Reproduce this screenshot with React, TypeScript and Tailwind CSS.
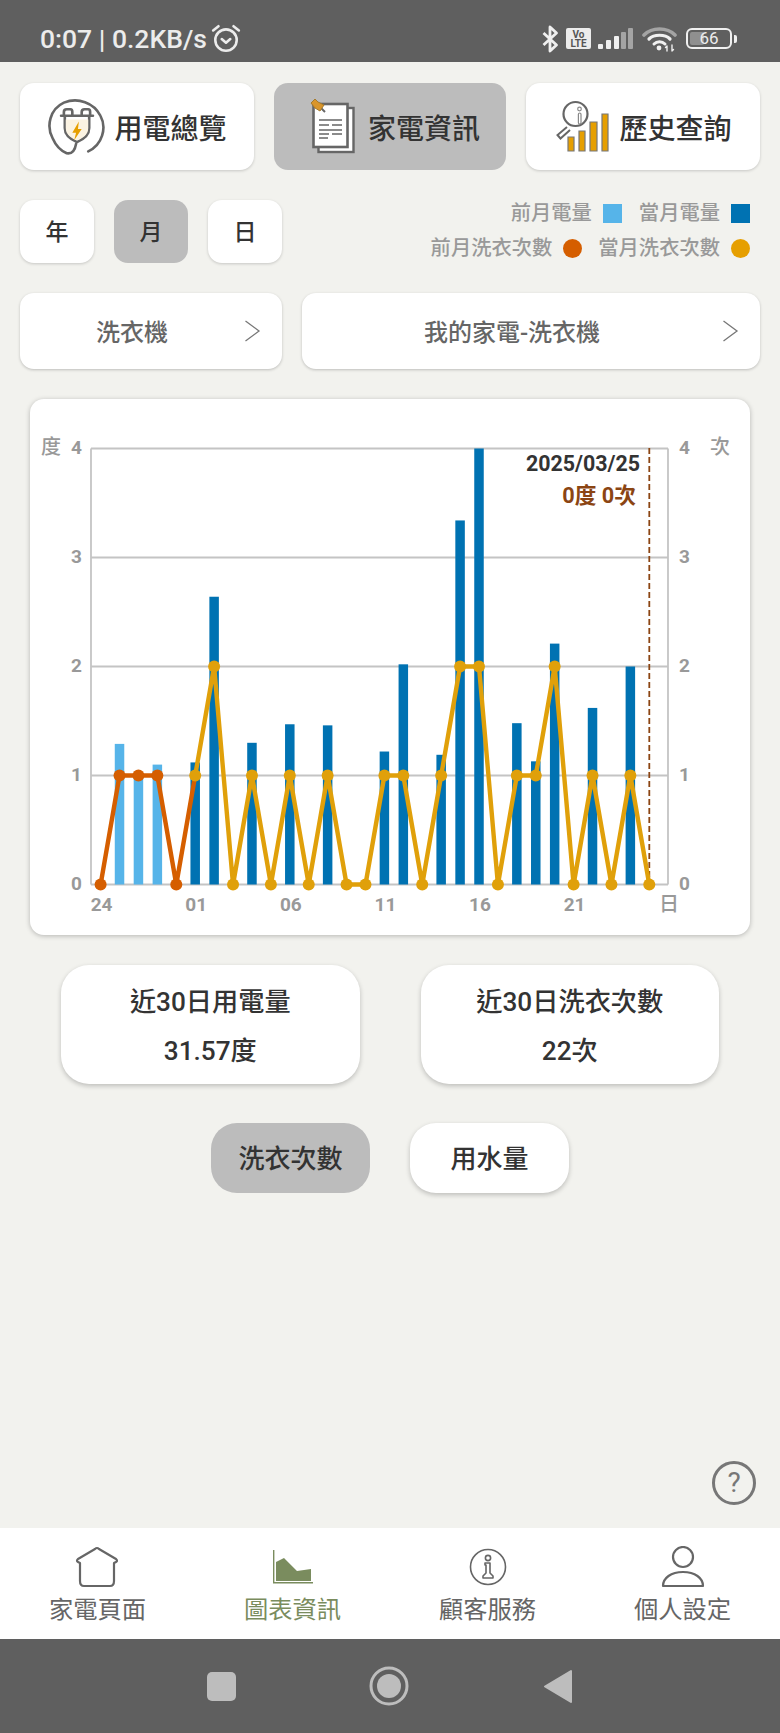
import type { ReactNode } from "react";

// kWh per day, slots 0-4 belong to the previous month
const BARS = [0, 1.29, 1, 1.1, 0, 1.12, 2.64, 0, 1.3, 0, 1.47, 0, 1.46, 0, 0, 1.22, 2.02, 0, 1.19, 3.34, 4, 0, 1.48, 1.13, 2.21, 0, 1.62, 0, 2, 0];
const WASHES = [0, 1, 1, 1, 0, 1, 2, 0, 1, 0, 1, 0, 1, 0, 0, 1, 1, 0, 1, 2, 2, 0, 1, 1, 2, 0, 1, 0, 1, 0];
const X_LABELS: [number, string][] = [[0, "24"], [5, "01"], [10, "06"], [15, "11"], [20, "16"], [25, "21"]];

const UNIT_H = 109;
const slotX = (i: number) => 100.6 + i * 18.92;
const valY = (v: number) => 884.5 - v * UNIT_H;

function PlugIcon() {
  return (
    <svg width="60" height="60" viewBox="0 0 64 64" fill="none" stroke="#666" strokeWidth="2.8">
      <path d="M44 58 C59 51 64 33 57 20 C50 6 33 0 18 6 C3 13 -1 31 6 44 C9 51 14 57 21 60 C27 61 30 56 31 50" strokeLinecap="round" />
      <path d="M15 20 H49 M19 20 V33 C19 41 25 45 32 48 C39 45 45 41 45 33 V20" strokeLinecap="round" />
      <path d="M18 20 V16 Q18 13 21 13 H25 Q27 13 27 16 V20 M37 20 V16 Q37 13 40 13 H44 Q46 13 46 16 V20" />
      <path d="M20 24 H44 V33 C44 40 38 44 32 46.5 C26 44 20 40 20 33 Z" fill="#fbf3e2" stroke="none" />
      <path d="M34 26 L27 38 H31 L29 46 L37 34 H33 Z" fill="#e69f00" stroke="none" />
    </svg>
  );
}

function DocIcon() {
  return (
    <svg width="48" height="58" viewBox="0 0 48 58" fill="none">
      <rect x="8.5" y="10" width="35" height="44" fill="#fff" stroke="#666" strokeWidth="2.4" />
      <rect x="3.5" y="6" width="34" height="43" fill="#fff" stroke="#666" strokeWidth="2.6" />
      <path d="M9 22 H32 M9 27 H19 M22 27 H32 M9 32 H32 M9 36 H19 M22 36 H32 M9 40 H18" stroke="#666" strokeWidth="1.6" />
      <path d="M10 9 L15 14" stroke="#666" strokeWidth="2" />
      <path d="M1 5 L5 1 L8 4 L14 7 L10 13 L5 10 Z" fill="#d9952a" stroke="#a57a2c" strokeWidth="1" />
    </svg>
  );
}

function SearchBarsIcon() {
  return (
    <svg width="56" height="54" viewBox="0 0 56 54" fill="none">
      <path d="M14 37 H20 V51 H14 Z M25 31 H31 V51 H25 Z M36 22 H43 V51 H36 Z M48 14 H54 V51 H48 Z" fill="#e69f00" stroke="#777" strokeWidth="1.2" />
      <path d="M13 27 L3.5 35 L6.5 38.5 L16 30" fill="#fff" stroke="#666" strokeWidth="2" />
      <circle cx="21.5" cy="14" r="12" fill="#fff" stroke="#666" strokeWidth="2.2" />
      <circle cx="25.5" cy="9" r="1.8" stroke="#888" strokeWidth="1.2" />
      <rect x="24.4" y="13" width="2.6" height="11" rx="1.3" stroke="#888" strokeWidth="1.2" />
    </svg>
  );
}

function AlarmIcon() {
  return (
    <svg width="30" height="29" viewBox="0 0 28 27" fill="none" stroke="#ececec" strokeWidth="2.4" strokeLinecap="round" strokeLinejoin="round">
      <circle cx="14" cy="15" r="10" />
      <path d="M2 6 L7 2 M26 6 L21 2" />
      <path d="M10 14 L14 17.5 L18 14" />
    </svg>
  );
}

function StatusIcons() {
  return (
    <div className="flex items-center">
      <svg width="17" height="28" viewBox="0 0 17 28" fill="none" stroke="#f0f0f0" strokeWidth="2.8" strokeLinejoin="round">
        <path d="M1.5 8 L14.5 20 L8 26 V2 L14.5 8 L1.5 20" />
      </svg>
      <div className="ml-[7px] flex h-[21px] w-[25px] flex-col items-center justify-center rounded-[2px] bg-[#ececec] text-[10px] leading-[9px] font-bold text-[#555]">
        <span>Vo</span>
        <span>LTE</span>
      </div>
      <svg className="ml-[7px]" width="35" height="22" viewBox="0 0 35 22">
        <rect x="0" y="16" width="5" height="5" rx="1" fill="#f0f0f0" />
        <rect x="8" y="12" width="5" height="9" rx="1" fill="#f0f0f0" />
        <rect x="16" y="8" width="5" height="13" rx="1" fill="#f0f0f0" />
        <rect x="23" y="4" width="5" height="17" rx="1" fill="#a4a4a4" />
        <rect x="30" y="0" width="5" height="21" rx="1" fill="#a4a4a4" />
      </svg>
      <svg className="ml-[9px]" width="35" height="26" viewBox="0 0 35 26" fill="none" strokeLinecap="round">
        <path d="M2 9 C10 1 25 1 33 9" stroke="#a4a4a4" strokeWidth="3.6" />
        <path d="M7 13 C12 8 23 8 28 13" stroke="#f0f0f0" strokeWidth="3.2" />
        <path d="M12 18 C15 15 20 15 23 18" stroke="#f0f0f0" strokeWidth="3" />
        <circle cx="17" cy="22" r="2.4" fill="#f0f0f0" />
        <path d="M25 20 V25 M23.5 21.5 L25 20 M30 19 V25 M31.5 23.5 L30 25" stroke="#f0f0f0" strokeWidth="1.4" />
      </svg>
      <div className="ml-[9px] flex items-center">
        <div className="relative flex h-[21px] w-[46px] items-center justify-center rounded-[6px] border-2 border-[#f0f0f0] text-[17px] leading-none text-[#ececec]">
          <div className="absolute top-[2px] bottom-[2px] left-[2px] w-[14px] rounded-[2px] bg-[#8f8f8f]" />
          <span className="relative">66</span>
        </div>
        <div className="ml-[2px] h-[8px] w-[3px] rounded-r-[2px] bg-[#f0f0f0]" />
      </div>
    </div>
  );
}

function TopTab({ icon, label, active, layout }: { icon: ReactNode; label: string; active?: boolean; layout: string }) {
  return (
    <div className={`flex h-[87px] items-center justify-center rounded-[14px] text-[28px] font-medium text-[#333] ${layout} ${active ? "bg-[#bcbcbc]" : "bg-white shadow-[0_1px_3px_rgba(0,0,0,0.18)]"}`}>
      {icon}
      <span className="pt-[6px]">{label}</span>
    </div>
  );
}

function PeriodBtn({ label, active }: { label: string; active?: boolean }) {
  return (
    <div className={`flex h-[63px] w-[74px] items-center justify-center rounded-[14px] pt-[4px] text-[23px] font-medium text-[#333] ${active ? "bg-[#bcbcbc]" : "bg-white shadow-[0_1px_3px_rgba(0,0,0,0.18)]"}`}>
      {label}
    </div>
  );
}

function SelectBox({ label }: { label: string }) {
  return (
    <div className="flex h-[76px] items-center rounded-[14px] bg-white pr-[21px] shadow-[0_1px_3px_rgba(0,0,0,0.22)]">
      <span className="flex-1 pt-[3px] text-center text-[24px] font-medium text-[#666]">{label}</span>
      <svg width="17" height="24" viewBox="0 0 17 24" fill="none" stroke="#777" strokeWidth="1.3">
        <path d="M1.5 2 L15 12 L1.5 22" />
      </svg>
    </div>
  );
}

function Legend({ label, swatch }: { label: string; swatch: string }) {
  return (
    <div className="flex items-center gap-[11px] text-[20.3px] leading-none text-[#999]">
      <span className="font-medium">{label}</span>
      <div className={swatch} />
    </div>
  );
}

function Chart() {
  const labelCls = "fill-[#999] text-[19px] font-bold";
  const line = (from: number, to: number) =>
    WASHES.slice(from, to + 1)
      .map((v, i) => `${slotX(from + i)},${valY(v)}`)
      .join(" ");
  return (
    <svg className="block" width="720" height="536" viewBox="30 399 720 536">
      {[0, 1, 2, 3, 4].map((v) => (
        <g key={v}>
          <line x1="91" x2="668" y1={valY(v)} y2={valY(v)} stroke="#c4c4c4" strokeWidth="1.8" />
          <text x="82" y={valY(v) + 5} textAnchor="end" className={labelCls}>{v}</text>
          <text x="679" y={valY(v) + 5} className={labelCls}>{v}</text>
        </g>
      ))}
      <line x1="91" x2="91" y1={valY(4)} y2={valY(0)} stroke="#c4c4c4" strokeWidth="1.8" />
      <line x1="668" x2="668" y1={valY(4)} y2={valY(0)} stroke="#c4c4c4" strokeWidth="1.8" />
      <text x="41" y="454" className="fill-[#999] text-[20px] font-medium">度</text>
      <text x="710" y="454" className="fill-[#999] text-[20px] font-medium">次</text>
      {BARS.map((v, i) =>
        v > 0 ? (
          <rect key={i} x={slotX(i) - 4.75} y={valY(v)} width="9.5" height={v * UNIT_H} fill={i < 5 ? "#56b4e9" : "#0072b2"} />
        ) : null,
      )}
      <line x1="649.3" x2="649.3" y1="448" y2="884" stroke="#8b4513" strokeWidth="1.8" strokeDasharray="6 3" />
      <polyline points={line(0, 5)} fill="none" stroke="#d55e00" strokeWidth="4.4" strokeLinejoin="round" />
      <polyline points={line(5, 29)} fill="none" stroke="#e0a00a" strokeWidth="4.4" strokeLinejoin="round" />
      {WASHES.map((v, i) => (
        <circle key={i} cx={slotX(i)} cy={valY(v)} r="6" fill={i < 5 ? "#d55e00" : "#e0a00a"} />
      ))}
      {X_LABELS.map(([i, t]) => (
        <text key={t} x={slotX(i) + 1} y="911" textAnchor="middle" className={labelCls}>{t}</text>
      ))}
      <text x="659" y="911" className="fill-[#999] text-[20px] font-medium">日</text>
      <text x="640" y="471" textAnchor="end" className="fill-[#333] text-[21.4px] font-bold">2025/03/25</text>
      <text x="636" y="503" textAnchor="end" className="fill-[#8b4513] text-[21.7px] font-bold">0度 0次</text>
    </svg>
  );
}

function StatCard({ title, value }: { title: string; value: string }) {
  return (
    <div className="flex h-[119px] flex-col items-center rounded-[28px] bg-white pt-[18px] text-[26.2px] leading-[38px] font-medium text-[#333] shadow-[0_2px_5px_rgba(0,0,0,0.22)]">
      <div>{title}</div>
      <div className="mt-[11px]">{value}</div>
    </div>
  );
}

function NavItem({ icon, label, active }: { icon: ReactNode; label: string; active?: boolean }) {
  return (
    <div className={`flex flex-col items-center text-[24.3px] leading-[34px] ${active ? "text-[#7a8c5e]" : "text-[#666]"}`}>
      <div className="flex h-[45px] items-center">{icon}</div>
      <div className="mt-[4px]">{label}</div>
    </div>
  );
}

export default function App() {
  return (
    <div className="flex h-[1733px] w-[780px] flex-col overflow-hidden bg-[#f2f2ee] [font-family:Roboto,'Noto_Sans_CJK_TC',sans-serif]">
      {/* Android status bar */}
      <div className="flex h-[62px] shrink-0 items-center justify-between bg-[#5f5f5f] pt-[15px] pr-[43px] pl-[40px]">
        <div className="flex items-center gap-[4px] text-[26.5px] leading-none font-medium text-[#ececec]">
          <span className="pt-[2px]">0:07 | 0.2KB/s</span>
          <AlarmIcon />
        </div>
        <StatusIcons />
      </div>

      <div className="flex flex-1 flex-col px-5">
        <div className="mt-[21px] grid grid-cols-[234px_232px_234px] gap-5">
          <TopTab icon={<PlugIcon />} label="用電總覽" layout="gap-[7px]" />
          <TopTab icon={<DocIcon />} label="家電資訊" active layout="gap-[10px] pl-[10px]" />
          <TopTab icon={<SearchBarsIcon />} label="歷史查詢" layout="gap-[9px]" />
        </div>

        <div className="mt-[30px] flex items-start justify-between pr-[10px]">
          <div className="flex gap-5">
            <PeriodBtn label="年" />
            <PeriodBtn label="月" active />
            <PeriodBtn label="日" />
          </div>
          <div className="flex flex-col items-end gap-[15px] pt-[3px]">
            <div className="flex gap-[17px]">
              <Legend label="前月電量" swatch="h-[19px] w-[19px] bg-[#56b4e9]" />
              <Legend label="當月電量" swatch="h-[19px] w-[19px] bg-[#0072b2]" />
            </div>
            <div className="flex gap-[16px]">
              <Legend label="前月洗衣次數" swatch="h-[19px] w-[19px] rounded-full bg-[#d55e00]" />
              <Legend label="當月洗衣次數" swatch="h-[19px] w-[19px] rounded-full bg-[#e69f00]" />
            </div>
          </div>
        </div>

        <div className="mt-[30px] grid grid-cols-[262px_1fr] gap-5">
          <SelectBox label="洗衣機" />
          <SelectBox label="我的家電-洗衣機" />
        </div>

        <div className="mx-[10px] mt-[30px] h-[536px] rounded-[14px] bg-white shadow-[0_1px_5px_rgba(0,0,0,0.25)]">
          <Chart />
        </div>

        <div className="mx-[41px] mt-[30px] grid grid-cols-2 gap-[61px]">
          <StatCard title="近30日用電量" value="31.57度" />
          <StatCard title="近30日洗衣次數" value="22次" />
        </div>

        <div className="mt-[39px] flex justify-center gap-[41px] text-[26px] font-medium text-[#333]">
          <div className="flex h-[70px] w-[159px] items-center justify-center rounded-[26px] bg-[#bcbcbc] pt-[3px]">洗衣次數</div>
          <div className="-ml-[1px] flex h-[70px] w-[159px] items-center justify-center rounded-[26px] bg-white pt-[3px] shadow-[0_2px_5px_rgba(0,0,0,0.22)]">用水量</div>
        </div>

        <div className="mt-auto flex justify-end pr-[4px] pb-[23px]">
          <div className="flex h-[44px] w-[44px] items-center justify-center rounded-full border-[3px] border-[#777] text-[28px] leading-none text-[#777]">?</div>
        </div>
      </div>

      {/* Bottom navigation */}
      <div className="grid h-[111px] shrink-0 grid-cols-4 bg-white pt-[16px]">
        <NavItem
          label="家電頁面"
          icon={
            <svg className="-ml-[2px]" width="44" height="42" viewBox="0 0 44 42" fill="none" stroke="#666" strokeWidth="2.2" strokeLinejoin="round">
              <path d="M22 2 Q23 2 24 3 L41 13 Q43 15 41 16 L39 17 V35 Q39 40 35 40 H9 Q5 40 5 35 V17 L3 16 Q1 15 3 13 L20 3 Q21 2 22 2 Z" />
            </svg>
          }
        />
        <NavItem
          active
          label="圖表資訊"
          icon={
            <svg width="42" height="34" viewBox="0 0 42 34" fill="#7a8c5e">
              <path d="M1 0 H2.4 V32 H41 V33.4 H1 Z" />
              <path d="M4 12 L12 8 L25 21 L39 19 V31 H4 Z" />
            </svg>
          }
        />
        <NavItem
          label="顧客服務"
          icon={
            <svg width="38" height="38" viewBox="0 0 38 38" fill="none" stroke="#666" strokeWidth="1.6">
              <circle cx="19" cy="19" r="17.5" />
              <circle cx="19" cy="10" r="2.6" />
              <path d="M16 15 H21 V25 L24 28 V30 H14 V28 L17 25 V17 H16 Z" strokeLinejoin="round" />
            </svg>
          }
        />
        <NavItem
          label="個人設定"
          icon={
            <svg width="44" height="42" viewBox="0 0 44 42" fill="none" stroke="#666" strokeWidth="2.2">
              <circle cx="22" cy="11" r="10" />
              <path d="M2 40 C2 32 10 26 22 26 C34 26 42 32 42 40 Z" strokeLinejoin="round" />
            </svg>
          }
        />
      </div>

      {/* Android nav bar */}
      <div className="flex h-[94px] shrink-0 items-center bg-[#5f5f5f] pl-[207px]">
        <div className="h-[29px] w-[29px] rounded-[5px] bg-[#bdbdbd]" />
        <svg className="ml-[133px]" width="40" height="40" viewBox="0 0 40 40">
          <circle cx="20" cy="20" r="18" fill="none" stroke="#bdbdbd" strokeWidth="3" />
          <circle cx="20" cy="20" r="12" fill="#bdbdbd" />
        </svg>
        <svg className="ml-[135px]" width="28" height="35" viewBox="0 0 28 35" fill="#bdbdbd" stroke="#bdbdbd" strokeWidth="2" strokeLinejoin="round">
          <path d="M27 2 V33 L1 17.5 Z" />
        </svg>
      </div>
    </div>
  );
}
